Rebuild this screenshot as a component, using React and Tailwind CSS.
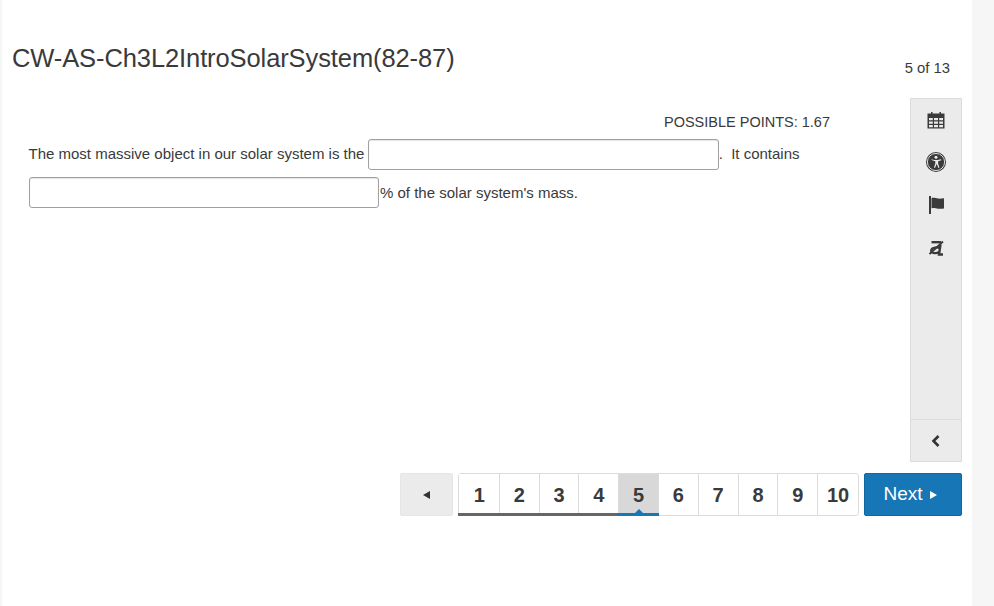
import React from "react";

const pages = [1, 2, 3, 4, 5, 6, 7, 8, 9, 10];

const CalendarIcon = () => (
  <svg width="18" height="18" viewBox="0 0 18 18" fill="#3a3a3a">
    <path d="M0.500 2.500h3.500V1h1.500v1.500h7V1H14v1.500h3.500V17.500H0.500z" />
    <path
      fill="#ebebeb"
      d="M2 7h3.800v2.300H2zM7 7h4v2.300H7zM12.200 7h3.800v2.300h-3.800zM2 10.500h3.800v2.300H2zM7 10.500h4v2.300H7zM12.200 10.500h3.800v2.300h-3.800zM2 14h3.800v2.200H2zM7 14h4v2.200H7zM12.200 14h3.800v2.200h-3.800z"
    />
  </svg>
);

const AccessIcon = () => (
  <svg width="20" height="20" viewBox="0 0 20 20">
    <circle cx="10" cy="10" r="10" fill="#3a3a3a" />
    <circle cx="10" cy="10" r="8.600" fill="none" stroke="#ebebeb" strokeWidth="0.9" />
    <circle cx="10" cy="5.300" r="1.500" fill="#ebebeb" />
    <path d="M5 7.300l3.300.8h3.400l3.300-.8.300 1-3.200 1v2.300l1.300 4-1 .4-1.500-3.800h-.4l-1.500 3.800-1-.4 1.300-4V9.300l-3.200-1z" fill="#ebebeb" />
  </svg>
);

const FlagIcon = () => (
  <svg width="16" height="18" viewBox="0 0 16 18" fill="#3a3a3a">
    <path d="M1 0h2V18H1z" />
    <path d="M3.500 2c2.500-.6 4.500.4 6.500.6 2 .2 3.500 0 6-.4v10.300c-2.500.4-4 .5-6 .2-2-.3-4-1-6.500-.3z" />
  </svg>
);

const NoTranslateIcon = () => (
  <svg width="15" height="16" viewBox="0 0 15 16" fill="none" stroke="#3a3a3a">
    <path d="M2.500 2.200h9.500" strokeWidth="2.400" />
    <path d="M11.500 8.300c-3-1.300-8.300-1.300-9.300 1.800-.8 3 4 4.200 8.500 1.700" strokeWidth="2.200" />
    <path d="M11.500 4.500l-1.500 10h4" strokeWidth="2.400" />
    <path d="M0.500 14L14 1.500" strokeWidth="1.800" />
  </svg>
);

export default function App() {
  return (
    <div className="flex h-[606px] w-full bg-[#f6f6f6] font-['Liberation_Sans',Arial,sans-serif] text-[#3a3a3a]">
      <main className="ml-[2px] flex w-[970px] flex-col bg-white">
        {/* header */}
        <header className="flex h-[98px] items-start justify-between pl-[10px] pr-[22px]">
          <h1 className="mt-[43px] text-[25.500px] leading-[31px] tracking-[-0.1px] font-normal">
            CW-AS-Ch3L2IntroSolarSystem(82-87)
          </h1>
          <span className="mt-[59px] text-[14.800px] leading-[18px]">5 of 13</span>
        </header>

        <div className="flex h-[364px] pr-[10px]">
          {/* question */}
          <section className="flex-1 pl-[27px] pr-[80px] text-[15px]">
            <p className="mt-[15px] text-right text-[14.500px] leading-[18px]">POSSIBLE POINTS: 1.67</p>
            <div className="mt-[3px] leading-[37.500px]">
              <span className="-ml-[0.500px] align-[-1px]">The most massive object in our solar system is the </span>
              <input
                aria-label="blank 1"
                className="-ml-[1px] h-[31px] w-[351px] rounded-[3px] border border-[#a0a0a0] bg-white align-middle shadow-[inset_0_1px_1px_rgba(0,0,0,0.1)]"
              />
              <span className="align-[-1px]">.&nbsp; It contains</span>
              <br />
              <input
                aria-label="blank 2"
                className="h-[31px] w-[350px] rounded-[3px] border border-[#a0a0a0] bg-white align-middle shadow-[inset_0_1px_1px_rgba(0,0,0,0.1)]"
              />
              <span className="ml-[1px] align-[-1px]">% of the solar system's mass.</span>
            </div>
          </section>

          {/* side tools */}
          <aside className="flex w-[52px] flex-col border border-[#dcdcdc] bg-[#ebebeb]">
            <div className="flex flex-1 flex-col items-center pt-[12px]">
              <div className="flex h-[18px] items-center"><CalendarIcon /></div>
              <div className="mt-[23px] flex h-[20px] items-center"><AccessIcon /></div>
              <div className="mt-[24px] flex h-[18px] items-center"><FlagIcon /></div>
              <div className="mt-[26px] flex h-[16px] items-center"><NoTranslateIcon /></div>
            </div>
            <div className="flex h-[42px] items-center justify-center border-t border-[#dcdcdc] pr-[2px] pt-[1px]">
              <svg width="9" height="12" viewBox="0 0 9 12" fill="none" stroke="#333" strokeWidth="2.600">
                <path d="M7.500 1L2.500 6l5 5" />
              </svg>
            </div>
          </aside>
        </div>

        {/* pager */}
        <nav className="mt-[11px] flex h-[43px] justify-end pr-[10px]">
          <button className="flex h-[43px] w-[53px] items-center justify-center rounded-[2px] border border-[#e6e6e6] bg-[#ebebeb]">
            <span className="h-0 w-0 border-y-[4px] border-r-[7px] border-y-transparent border-r-[#333]" />
          </button>
          <ol className="ml-[5px] flex h-[43px] w-[401px] rounded-[3px] border border-[#dcdcdc]">
            {pages.map((p) => (
              <li
                key={p}
                className={
                  p === 1
                    ? "relative flex w-[40.800px] items-center justify-center border-r border-[#dcdcdc] bg-white pl-[1px] text-[20px] font-bold"
                    : p === 5
                      ? "relative flex w-[39.800px] items-center justify-center border-r border-[#dcdcdc] bg-[#d8d8d8] text-[20px] font-bold"
                      : p === 10
                        ? "relative flex flex-1 items-center justify-center text-[20px] font-bold"
                        : "relative flex w-[39.800px] items-center justify-center border-r border-[#dcdcdc] bg-white text-[20px] font-bold"
                }
              >
                {p}
                {p < 5 && <span className="absolute -bottom-px -left-px -right-px h-[3px] bg-[#666]" />}
                {p === 5 && (
                  <>
                    <span className="absolute -bottom-px -left-px -right-px h-[3px] bg-[#1776b6]" />
                    <span className="absolute bottom-[2px] left-1/2 -ml-[4px] h-0 w-0 border-x-[4px] border-b-[4px] border-x-transparent border-b-[#1776b6]" />
                  </>
                )}
              </li>
            ))}
          </ol>
          <button className="ml-[5px] flex h-[43px] w-[98px] items-center justify-center gap-[7px] rounded-[2px] border border-[#11689f] bg-[#1776b6] pr-[6px] text-[19px] text-white">
            Next
            <span className="h-0 w-0 border-y-[4px] border-l-[7px] border-y-transparent border-l-white" />
          </button>
        </nav>
      </main>
    </div>
  );
}
